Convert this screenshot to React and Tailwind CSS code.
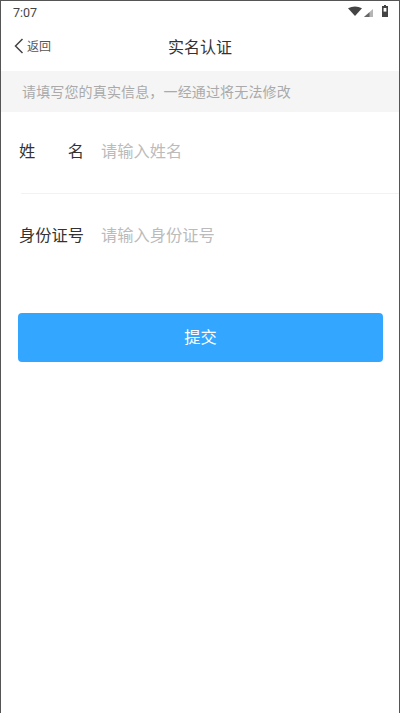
import React from "react";

export default function App() {
  return (
    <div className="h-[713px] w-[400px] overflow-hidden bg-white font-['Noto_Sans_CJK_SC','Noto_Sans',sans-serif] border-l border-r border-t border-[#555]">
      <div className="flex h-6 items-center justify-between pl-[12px] pr-[11px] pt-[1px]">
        <span className="font-['Roboto',sans-serif] text-[12.5px] leading-none text-[#444]">7:07</span>
        <div className="mt-[-1px] flex items-end self-start pt-[4px]">
          <svg width="14" height="10" viewBox="0 0 14 10" className="mb-[1px]"><path d="M0 2.2 Q7 -1.4 14 2.2 L7 10 Z" fill="#444" /></svg>
          <svg width="9" height="8" viewBox="0 0 9 8" className="ml-[2px]"><path d="M9 0 V8 H0 Z" fill="#b5b5b5" /><path d="M5.5 3.2 V8 H0 Z" fill="#666" /></svg>
          <svg width="6" height="12" viewBox="0 0 6 12" className="ml-[9px]"><path d="M2 0 H4 V1 H6 V12 H0 V1 H2 Z" fill="#444" /><rect x="1.6" y="3" width="2.8" height="3.6" fill="#fff" /></svg>
        </div>
      </div>
      <div className="relative flex h-[46px] items-center justify-center pb-[4px]">
        <div className="absolute left-[13px] top-[13px] flex items-center">
          <svg width="10" height="16" viewBox="0 0 10 16"><path d="M8.5 1 L1.5 8 L8.5 15" fill="none" stroke="#444" strokeWidth="1.5" /></svg>
          <span className="ml-[3px] text-[12px] leading-none text-[#555]">返回</span>
        </div>
        <span className="text-[16px] leading-none text-[#333]">实名认证</span>
      </div>
      <div className="flex h-[41px] items-center bg-[#f5f5f5] pb-[1px] pl-[21px] text-[14px] tracking-[0.15px] text-[#aaa]">
        请填写您的真实信息，一经通过将无法修改
      </div>
      <div className="flex h-[81px] items-center pb-[4px] pl-[18px]">
        <div className="flex w-[65px] justify-between text-[16.25px] text-[#333]"><span>姓</span><span>名</span></div>
        <span className="ml-[17px] text-[16.25px] text-[#bbb]">请输入姓名</span>
      </div>
      <div className="ml-[20px] h-px bg-[#f2f2f2]" />
      <div className="flex h-[84px] items-center pb-[4px] pl-[18px]">
        <div className="w-[65px] text-[16.25px] text-[#333]">身份证号</div>
        <span className="ml-[17px] text-[16.25px] text-[#bbb]">请输入身份证号</span>
      </div>
      <div className="ml-[17px] mr-[16px] mt-[35px] flex h-[49px] items-center justify-center rounded-[4px] bg-[#33a7ff] pb-[3px] text-[16.25px] text-white">
        提交
      </div>
    </div>
  );
}
